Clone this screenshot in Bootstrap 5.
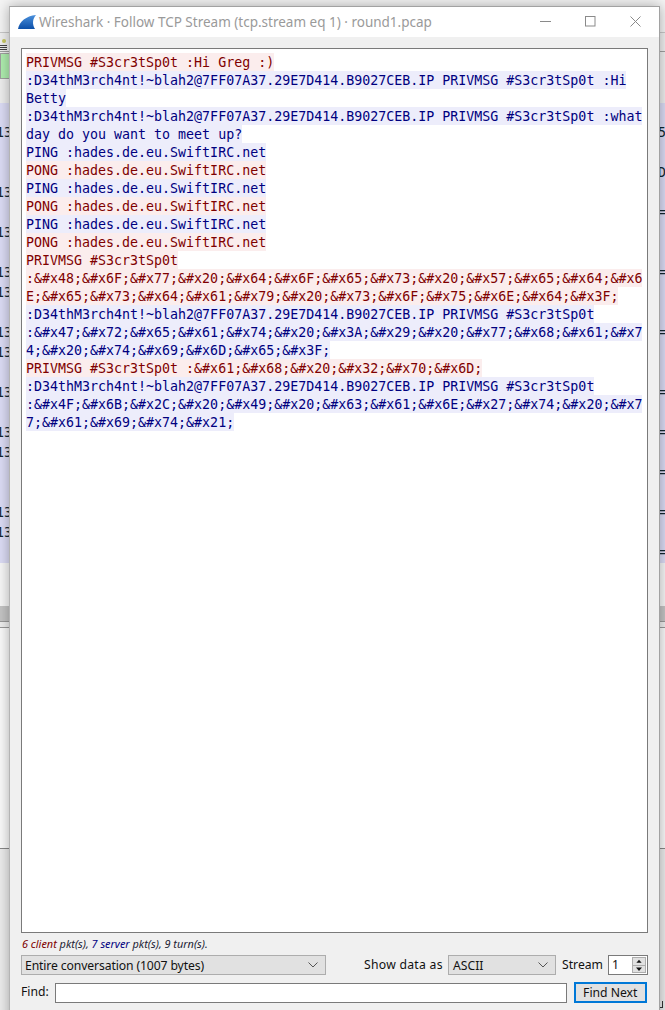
<!DOCTYPE html>
<html lang="en">
<head>
<meta charset="utf-8">
<title>Wireshark · Follow TCP Stream</title>
<link href="https://cdn.jsdelivr.net/npm/bootstrap@5.3.0/dist/css/bootstrap.min.css" rel="stylesheet">
<style>
html,body{margin:0;background:#f0f0f0;overflow:hidden}
.desk{position:relative;width:665px;height:1010px;overflow:hidden;font-family:"Noto Sans",sans-serif}
.bg-top{height:33px;background:#f4f4f4;border-bottom:1px solid #c8c8c8}
.bg-tools{height:19px;background:#f0f0f0;border-bottom:1px solid #a0a0a0}
.bg-tools svg{display:block}
.bg-filter{height:28px;padding:1px 0;background:#f0f0f0}
.bg-green{width:640px;background:#afeeaf;border:1px solid #a0a0a0}
.bg-fbtn{width:5px;margin:4px 0 0 15px;height:22px;border:1px solid #888;border-left:0}
.bg-gap{height:23px;background:#eeeeee}
.bg-list{background:#dcdcf5;font:13.3px/20px "DejaVu Sans Mono",monospace;color:#12272e}
.bg-row{height:20px;display:flex;white-space:nowrap;overflow:hidden}
.bg-l{width:662px;flex:none;margin-left:-4px}
.bg-blank{height:43px;background:#f7f7f7}
.bg-scroll{height:16px;background:#c4c4c4;border-bottom:1px solid #999}
.bg-sp{height:6px;background:#eee;border-bottom:1px solid #999}
.bg-detail{height:221px;background:#fafafa;border-bottom:1px solid #888}
.bg-bytes{height:170px;background:#ececec}
.grip{position:absolute;left:660px;top:1001px;width:3px;height:7px;border-right:1px solid #333;border-bottom:1px solid #333}
.win{position:absolute;left:9px;top:6px;width:651px;height:1020px;background:#f0f0f0;border:1px solid #a2a2a2;border-left-color:#b4b4b4;box-shadow:0 0 12px rgba(0,0,0,.32);display:flex;flex-direction:column}
.ttl{height:30px;background:#fff;flex:none;padding-left:8px;color:#9a9a9a;font-size:13.5px;gap:3px}
.ctl{margin-left:auto;gap:0}
.ctl svg{display:block}
.bodyw{padding:11px 11px 0 11px;flex:1}
.strm{height:885px;width:627px;background:#fff;border:1px solid #7a7a7a;padding:4px;font:13.3px/18px "DejaVu Sans Mono",monospace;overflow:hidden}
.ln{width:fit-content;height:18px;padding-top:1px;white-space:pre}
.cl{color:#7f0000;background:#fbeded}
.sv{color:#00007f;background:#ededfb}
.stat{font-size:10.9px;font-style:italic;line-height:12px;margin:5px 0 5px 1px;color:#223;height:12px}
.stat .r{color:#7f0000}.stat .b{color:#00007f}
.ctr{font-size:12.2px;color:#111}
.ddn{height:20px;background:#e1e1e1;border:1px solid #adadad;border-radius:0;padding:0 3px;font-size:12.2px;color:#111;text-align:left;line-height:17px}
.ddn:hover{background:#e1e1e1;border-color:#adadad;color:#111}
.ddn svg{flex:none}
.dd1{width:305px;letter-spacing:-.12px}
.dd2{width:108px;margin-left:6px;padding-left:4px}
.lbs{width:78px;margin-left:auto;letter-spacing:.27px;white-space:nowrap}
.lbt{width:40px;margin-left:6px;white-space:nowrap}
.spn{width:40px;height:20px;background:#fff;border:1px solid #7a7a7a;margin-left:6px;padding:0 1px 0 3px;line-height:17px}
.spb{margin-left:auto;width:14px;height:16px;margin-top:1px;background:#e1e1e1;border:1px solid #adadad}
.spb svg{display:block;height:7px}
.spb svg:first-child{border-bottom:1px solid #adadad;height:8px}
.frow{margin-top:7px;height:21px}
.finp{width:512px;height:20px;margin:0 0 0 6px;background:#fff;border:1px solid #7a7a7a;border-radius:0;padding:0 2px}
.fbtn{width:73px;height:21px;margin-left:7px;padding:0;background:#e1e1e1;border:2px solid #0078d7;border-radius:0;font-size:12.2px;color:#111;line-height:16px}
.fbtn:hover{background:#e1e1e1;border-color:#0078d7;color:#111}
</style>
</head>
<body>
<div class="desk">
  <div class="bg-top"></div>
  <div class="bg-tools"><svg width="9" height="18" viewBox="0 0 9 18" aria-hidden="true"><circle cx="4" cy="8" r="2" fill="#c8c860"/><path d="M0 12.500H7M0 14.500H7M0 16.500H7" stroke="#444" fill="none"/></svg></div>
  <div class="bg-filter d-flex"><div class="bg-green"></div><div class="bg-fbtn"></div></div>
  <div class="bg-gap"></div>
  <div class="bg-list" id="plist"></div>
  <div class="bg-blank"></div>
  <div class="bg-scroll"></div>
  <div class="bg-sp"></div>
  <div class="bg-detail"></div>
  <div class="bg-bytes"></div>
  <div class="grip"></div>

  <div class="win">
    <div class="ttl d-flex align-items-center">
      <svg width="18" height="16" viewBox="0 0 18 16" aria-hidden="true"><defs><linearGradient id="fin" x1="0" y1="0" x2="0" y2="1"><stop offset="0" stop-color="#4a90dc"/><stop offset="1" stop-color="#0b4fa8"/></linearGradient></defs><path d="M0 15C1.500 7.500 8 2 18 1C14.500 5 14 10 17 15Z" fill="url(#fin)"/></svg>
      <span>Wireshark · Follow TCP Stream (tcp.stream eq 1) · round1.pcap</span>
      <div class="ctl d-flex align-items-center">
        <svg width="46" height="30" viewBox="0 0 46 30" aria-hidden="true"><path d="M19 14.500H30" stroke="#8a8a8a" fill="none"/></svg>
        <svg width="46" height="30" viewBox="0 0 46 30" aria-hidden="true"><rect x="18.500" y="9.500" width="9.500" height="9.500" stroke="#8a8a8a" fill="none"/></svg>
        <svg width="46" height="30" viewBox="0 0 46 30" aria-hidden="true"><path d="M17.500 9.500L27.500 19.500M27.500 9.500L17.500 19.500" stroke="#8a8a8a" fill="none"/></svg>
      </div>
    </div>
    <div class="bodyw">
      <div class="strm" id="strm"></div>
      <div class="stat"><span class="r">6 client</span> pkt(s), <span class="b">7 server</span> pkt(s), 9 turn(s).</div>
      <div class="d-flex align-items-center ctr">
        <button type="button" class="btn ddn dd1 d-flex justify-content-between align-items-center"><span>Entire conversation (1007 bytes)</span><svg width="10" height="6" viewBox="0 0 10 6" class="me-1" aria-hidden="true"><path d="M.5 .5L5 5L9.500 .5" stroke="#555" fill="none"/></svg></button>
        <span class="lbs">Show data as</span>
        <button type="button" class="btn ddn dd2 d-flex justify-content-between align-items-center"><span>ASCII</span><svg width="10" height="6" viewBox="0 0 10 6" class="me-1" aria-hidden="true"><path d="M.5 .5L5 5L9.500 .5" stroke="#555" fill="none"/></svg></button>
        <span class="lbt">Stream</span>
        <div class="spn d-flex"><span>1</span><div class="spb"><svg width="12" height="8" viewBox="0 0 12 8" aria-hidden="true"><path d="M6 2L9 5.500H3Z" fill="#111"/></svg><svg width="12" height="7" viewBox="0 0 12 7" aria-hidden="true"><path d="M3 1.500H9L6 5Z" fill="#111"/></svg></div></div>
      </div>
      <div class="frow d-flex align-items-center ctr">
        <span>Find:</span>
        <input type="text" class="form-control finp" aria-label="Find">
        <button type="button" class="btn fbtn">Find Next</button>
      </div>
    </div>
  </div>
</div>
<script>
var J=":D34thM3rch4nt!~blah2@7FF07A37.29E7D414.B9027CEB.IP PRIVMSG #S3cr3tSp0t";
var P="PING :hades.de.eu.SwiftIRC.net",O="PONG :hades.de.eu.SwiftIRC.net";
var L=[["cl","PRIVMSG #S3cr3tSp0t :Hi Greg :)"],["sv",J+" :Hi"],["sv","Betty"],["sv",J+" :what"],["sv","day do you want to meet up?"],
["sv",P],["cl",O],["sv",P],["cl",O],["sv",P],["cl",O],
["cl","PRIVMSG #S3cr3tSp0t"],
["cl",":&#x48;&#x6F;&#x77;&#x20;&#x64;&#x6F;&#x65;&#x73;&#x20;&#x57;&#x65;&#x64;&#x6"],
["cl","E;&#x65;&#x73;&#x64;&#x61;&#x79;&#x20;&#x73;&#x6F;&#x75;&#x6E;&#x64;&#x3F;"],
["sv",J],
["sv",":&#x47;&#x72;&#x65;&#x61;&#x74;&#x20;&#x3A;&#x29;&#x20;&#x77;&#x68;&#x61;&#x7"],
["sv","4;&#x20;&#x74;&#x69;&#x6D;&#x65;&#x3F;"],
["cl","PRIVMSG #S3cr3tSp0t :&#x61;&#x68;&#x20;&#x32;&#x70;&#x6D;"],
["sv",J],
["sv",":&#x4F;&#x6B;&#x2C;&#x20;&#x49;&#x20;&#x63;&#x61;&#x6E;&#x27;&#x74;&#x20;&#x7"],
["sv","7;&#x61;&#x69;&#x74;&#x21;"]];
var s=document.getElementById("strm");
L.forEach(function(l){var d=document.createElement("div");d.className="ln "+l[0];d.textContent=l[1];s.appendChild(d);});
var left=[1,4,6,8,9,11,12,14,16,17,20,21];
var right={1:"5",3:"D",5:"=4",8:"=4",11:"=4",14:"=",16:"=",18:"=",20:"=",22:"="};
var pl=document.getElementById("plist");
for(var i=0;i<23;i++){var r=document.createElement("div");r.className="bg-row";var a=document.createElement("span");a.className="bg-l";var b=document.createElement("span");a.textContent=left.indexOf(i)>=0?"13":"";b.textContent=right[i]||"";r.appendChild(a);r.appendChild(b);pl.appendChild(r);}
</script>
</body>
</html>
